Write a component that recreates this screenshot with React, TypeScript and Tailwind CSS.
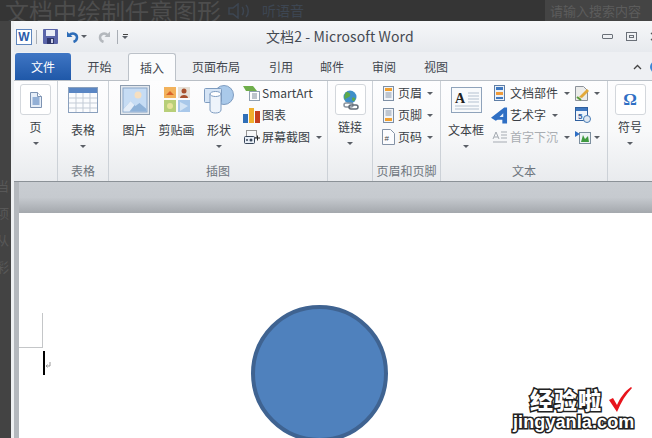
import React from "react";

const font = { fontFamily: '"Noto Sans CJK SC", "Liberation Sans", sans-serif' };

function Arrow({ cls = "" }: { cls?: string }) {
  return <span className={`inline-block w-0 h-0 border-x-[3px] border-x-transparent border-t-[3px] border-t-[#5a5f66] ${cls}`} />;
}

function PageIcon() {
  return (
    <svg width="12" height="16" viewBox="0 0 12 16">
      <path d="M.5.5h7l4 4v11H.500z" fill="#e6eef8" stroke="#7d93b2" />
      <rect x="2.500" y="5" width="7" height="8" fill="#93b0d6" />
      <path d="M7.500 .5v4h4" fill="#fff" stroke="#7d93b2" />
    </svg>
  );
}

function TableIcon() {
  return (
    <svg width="30" height="26" viewBox="0 0 30 26">
      <rect x=".5" y=".5" width="29" height="25" fill="#fbfcfe" stroke="#8aa0bd" />
      <rect x="1" y="1" width="28" height="5" fill="#5a86c4" />
      <path d="M1 11h28M1 16h28M1 21h28M8 6v19M15 6v19M22 6v19" stroke="#c3cbd6" />
    </svg>
  );
}

function PictureIcon() {
  return (
    <svg width="30" height="30" viewBox="0 0 30 30">
      <rect x=".5" y=".5" width="29" height="29" fill="#e3e8ee" stroke="#8d9db0" />
      <rect x="3" y="3" width="24" height="24" fill="#c6dcf4" stroke="#8aa6c8" />
      <circle cx="18" cy="10" r="3.500" fill="#f6dfc0" />
      <path d="M3.500 24l7-8 5 5 4-3 7 6v2.500H3.500z" fill="#8fb2d8" />
      <path d="M3.500 24l7-8 4 4-5 6.500H3.500z" fill="#e4edf8" />
    </svg>
  );
}

function ClipIcon() {
  return (
    <svg width="26" height="25" viewBox="0 0 26 25">
      <rect x="0" y="0" width="12" height="11" fill="#f2b25c" />
      <path d="M2 8l4-4 4 4z" fill="#d9652a" />
      <rect x="14" y="0" width="12" height="11" fill="#e6e0d6" />
      <circle cx="20" cy="4" r="2.500" fill="#a8502c" />
      <path d="M16 11c0-4 8-4 8 0z" fill="#a8502c" />
      <rect x="0" y="13" width="12" height="12" fill="#b8cf79" />
      <circle cx="6" cy="19" r="3" fill="#e6e39a" />
      <rect x="14" y="13" width="12" height="12" fill="#a9c8ea" />
      <path d="M16 15l8 4-8 5z" fill="#d4e4f5" />
    </svg>
  );
}

function ShapeIcon() {
  return (
    <svg width="30" height="29" viewBox="0 0 30 29">
      <circle cx="20" cy="10" r="9.500" fill="#a9c9ea" stroke="#7e9cc0" />
      <rect x=".5" y="3.500" width="17" height="14" rx="1" fill="#d5e4f5" stroke="#7e9cc0" />
      <path d="M6 9v16c0 4 11 4 11 0V9z" fill="#eef4fb" stroke="#7e9cc0" />
      <ellipse cx="11.500" cy="9" rx="5.500" ry="2.500" fill="#fff" stroke="#7e9cc0" />
    </svg>
  );
}

function SmartArtIcon() {
  return (
    <svg width="17" height="16" viewBox="0 0 17 16">
      <path d="M0 1h10l4 5H3z" fill="#6fae4b" />
      <rect x="6.500" y="6.500" width="10" height="9" fill="#fff" stroke="#90a0b0" />
      <path d="M9 9h5M9 11h5M9 13h5" stroke="#7d8b99" />
    </svg>
  );
}

function ChartIcon() {
  return (
    <svg width="17" height="16" viewBox="0 0 17 16">
      <rect x="0" y="7" width="5" height="9" fill="#2f6fb8" />
      <rect x="6" y="1" width="5" height="15" fill="#f0b02c" />
      <rect x="12" y="4" width="5" height="12" fill="#c5401e" />
    </svg>
  );
}

function ShotIcon() {
  return (
    <svg width="16" height="14" viewBox="0 0 16 14">
      <rect x="2.500" y=".5" width="10" height="7" fill="none" stroke="#333" strokeDasharray="1 1" />
      <rect x=".5" y="6.500" width="10" height="7" rx="1" fill="#e8eef6" stroke="#39475a" />
      <circle cx="3" cy="10" r="1" fill="#39475a" />
      <circle cx="7" cy="10" r="1.500" fill="#39475a" />
      <path d="M11 8h5M13.500 5.500v5" stroke="#222" />
    </svg>
  );
}

function GlobeIcon() {
  return (
    <svg width="17" height="20" viewBox="0 0 17 20">
      <circle cx="8" cy="7" r="6.500" fill="#3f8fc9" />
      <path d="M4 2c3 0 5 2 4 4s-4 1-5 4c-1-2-1-5 1-8zM10 8c2-1 4 0 3 2s-3 2-3-2z" fill="#5ca94a" />
      <rect x="2" y="13" width="9" height="4" rx="2" fill="none" stroke="#8a949e" strokeWidth="1.500" />
      <rect x="7" y="15" width="9" height="4" rx="2" fill="none" stroke="#626b75" strokeWidth="1.500" />
    </svg>
  );
}

function HeaderIcon({ bottom }: { bottom?: boolean }) {
  return (
    <svg width="11" height="15" viewBox="0 0 11 15">
      <rect x=".5" y=".5" width="10" height="14" fill="#f2f5f9" stroke="#7d8fa5" />
      {bottom ? (
        <>
          <path d="M2.500 3h6M2.500 5h6M2.500 7h6" stroke="#8a97a8" />
          <rect x="2" y="10" width="7" height="3" fill="#f0a030" />
        </>
      ) : (
        <>
          <rect x="2" y="2" width="7" height="3" fill="#f0a030" />
          <path d="M2.500 7h6M2.500 9h6M2.500 11h6" stroke="#8a97a8" />
        </>
      )}
    </svg>
  );
}

function PartsIcon() {
  return (
    <svg width="11" height="16" viewBox="0 0 11 16">
      <rect x=".5" y=".5" width="10" height="15" fill="#eaf0f7" stroke="#5f7ea6" />
      <rect x="2" y="2" width="7" height="3" fill="#3f78c0" />
      <rect x="2" y="7" width="7" height="3" fill="#ee9a3a" />
      <rect x="2" y="12" width="7" height="2" fill="#3f78c0" />
    </svg>
  );
}

function PageNumIcon() {
  return (
    <svg width="13" height="16" viewBox="0 0 13 16">
      <path d="M.5.5h8l4 4v11H.500z" fill="#fbfcfe" stroke="#8493a6" />
      <text x="2.500" y="11.500" fontSize="8" fill="#444" fontFamily="Liberation Sans">#</text>
    </svg>
  );
}

function TextBoxIcon() {
  return (
    <svg width="31" height="26" viewBox="0 0 31 26">
      <rect x=".5" y=".5" width="30" height="25" fill="#f8fafc" stroke="#8fa3bb" />
      <path d="M17 6h11M17 9h11M17 12h11M17 15h11M4 19h24M4 22h24" stroke="#b4c1d0" />
      <text x="4" y="16" fontSize="14" fontWeight="700" fill="#222" fontFamily="Liberation Serif">A</text>
    </svg>
  );
}

function WordArtIcon() {
  return (
    <svg width="18" height="17" viewBox="0 0 18 17">
      <path d="M0 11L14 0h3v17h-5v-4H7l-2 1z" fill="#2f6fc4" />
      <path d="M9 10l4-4v4z" fill="#eaf2fb" />
    </svg>
  );
}

function DropCapIcon() {
  return (
    <svg width="15" height="14" viewBox="0 0 15 14">
      <path d="M1 9l3-7 3 7M2 7h4M9 2h6M9 5h6M9 8h6M1 12h14" stroke="#a5abb2" fill="none" />
    </svg>
  );
}

function SignIcon() {
  return (
    <svg width="15" height="15" viewBox="0 0 15 15">
      <path d="M.5.5h8l4 4v10H.500z" fill="#ececea" stroke="#8c929a" />
      <path d="M4 11l8-8 2 2-7 7z" fill="#e2a93a" />
      <path d="M2 11l4 3" stroke="#5c9a3a" strokeWidth="2" />
    </svg>
  );
}

function DateIcon() {
  return (
    <svg width="16" height="16" viewBox="0 0 16 16">
      <rect x=".5" y=".5" width="12" height="13" fill="#eef4fb" stroke="#2f5f9e" />
      <rect x="1" y="1" width="11" height="3" fill="#3f78c0" />
      <text x="3" y="12" fontSize="8" fontWeight="700" fill="#2f5f9e" fontFamily="Liberation Sans">5</text>
      <circle cx="12" cy="12" r="3.500" fill="#dfe8f2" stroke="#4a7db5" />
    </svg>
  );
}

function ObjectIcon() {
  return (
    <svg width="16" height="14" viewBox="0 0 16 14">
      <rect x="4.500" y="2.500" width="11" height="11" fill="#eef3f6" stroke="#7d8f9f" />
      <path d="M6 12l2-7 2 4 3-3 1 6z" fill="#3f9a3f" />
      <path d="M0 1l5 3-5 3z" fill="#2f6fc4" />
    </svg>
  );
}

function Group({ label, w, children }: { label?: string; w: string; children: React.ReactNode }) {
  return (
    <div className={`${w} shrink-0 h-full flex flex-col border-r border-[#ccd1d7]`}>
      <div className="h-[80px] flex">{children}</div>
      <div className="h-[19px] flex items-center justify-center text-[12px] leading-none text-[#6e757d]">{label}</div>
    </div>
  );
}

function Big({ icon, label, w, arrow, boxed, mt = "" }: { icon: React.ReactNode; label: string; w: string; arrow?: boolean; boxed?: boolean; mt?: string }) {
  return (
    <div className={`${w} shrink-0 flex flex-col items-center pt-[3px]`}>
      {boxed ? (
        <div className="w-[31px] h-[31px] rounded-[3px] border border-[#d3d7dc] bg-white flex items-center justify-center">{icon}</div>
      ) : (
        <div className="h-[31px] flex items-center justify-center">{icon}</div>
      )}
      <div className={`text-[12px] leading-none text-[#3a3f46] whitespace-nowrap ${mt || "mt-[6px]"}`}>{label}</div>
      {arrow && <Arrow cls="mt-[9px]" />}
    </div>
  );
}

function Small({ icon, label, arrow, disabled, gap = "gap-[2px]" }: { icon: React.ReactNode; label: string; arrow?: boolean; disabled?: boolean; gap?: string }) {
  return (
    <div className={`h-[22px] flex items-center ${gap} whitespace-nowrap`}>
      <span className="w-[17px] flex justify-center">{icon}</span>
      <span className={`text-[12px] leading-none ${disabled ? "text-[#a9adb2]" : "text-[#3a3f46]"}`}>{label}</span>
      {arrow && <Arrow cls="ml-[4px]" />}
    </div>
  );
}

const tabs = [
  ["开始", "w-[57px]"],
  ["插入", "w-[48px]"],
  ["页面布局", "w-[80px]"],
  ["引用", "w-[50px]"],
  ["邮件", "w-[52px]"],
  ["审阅", "w-[52px]"],
  ["视图", "w-[52px]"],
] as const;

export default function App() {
  return (
    <div style={font} className="relative w-[652px] h-[438px] overflow-hidden bg-[#3a3a3a] flex flex-col">
      <div className="h-[21px] shrink-0 flex items-center overflow-hidden bg-[#353535]">
        <span className="pl-[5px] text-[24px] leading-none text-[#4d4d4d] whitespace-nowrap">文档中绘制任意图形</span>
        <svg className="ml-[7px]" width="24" height="16" viewBox="0 0 24 16" fill="none" stroke="#3d4652" strokeWidth="1.500">
          <path d="M1 5h4l5-4v14l-5-4H1zM14 4c2 2 2 6 0 8M18 2c3 3 3 9 0 12" />
        </svg>
        <span className="ml-[10px] text-[14px] text-[#3d4652] whitespace-nowrap">听语音</span>
        <div className="ml-auto w-[107px] h-full bg-[#444444] flex items-center pl-[5px] text-[13px] text-[#5c5c5c] whitespace-nowrap">请输入搜索内容</div>
      </div>
      <div className="flex-1 flex min-h-0">
        <div className="w-[11px] shrink-0 bg-[#434343] flex flex-col items-start overflow-hidden text-[13px] leading-none text-[#585858] pt-[158px] gap-[14px]">
          <span className="-ml-[4px]">当</span>
          <span className="-ml-[4px]">项</span>
          <span className="-ml-[4px]">从</span>
          <span className="-ml-[4px]">彩</span>
        </div>
        <div className="w-[3px] shrink-0 bg-[#eef0f2]" />
        <div className="flex-1 min-w-0 flex flex-col bg-[#eef0f3]">
          <div className="h-[31px] shrink-0 flex items-center pl-[2px] bg-gradient-to-b from-[#f6f7f9] to-[#e7eaee]">
            <div className="w-[16px] h-[16px] shrink-0 bg-white border border-[#5f86bd] flex items-center justify-center text-[12px] font-bold leading-none text-[#2a5caa]" style={{ fontFamily: '"Liberation Sans", sans-serif' }}>W</div>
            <div className="w-px h-[14px] bg-[#a9aeb5] ml-[4px]" />
            <svg className="ml-[6px]" width="15" height="15" viewBox="0 0 15 15">
              <rect width="15" height="15" rx="1" fill="#5a64a8" />
              <rect x="3" y="1" width="9" height="6" fill="#e9ecf6" />
              <rect x="4" y="9" width="7" height="6" fill="#2e356b" />
              <rect x="8" y="10" width="2" height="4" fill="#c9cde6" />
            </svg>
            <svg className="ml-[8px]" width="13" height="13" viewBox="0 0 13 13" fill="none">
              <path d="M1 1.500v5.500h5.500z" fill="#2e6db8" />
              <path d="M3 5.500c3-3.500 8-2 8 2 0 2-1 3.500-3.500 4.500" stroke="#2e6db8" strokeWidth="2.500" />
            </svg>
            <Arrow cls="ml-[2px]" />
            <svg className="ml-[11px]" width="13" height="13" viewBox="0 0 13 13" fill="none">
              <path d="M12 1.500v5.500H6.500z" fill="#b4b8bd" />
              <path d="M10 5.500c-3-3.500-8-2-8 2 0 2 1 3.500 3.500 4.500" stroke="#b4b8bd" strokeWidth="2.500" />
            </svg>
            <div className="w-px h-[14px] bg-[#a9aeb5] ml-[6px]" />
            <div className="ml-[4px] flex flex-col items-center gap-[1px]">
              <div className="w-[5px] h-px bg-[#444]" />
              <Arrow />
            </div>
            <span className="ml-[138px] text-[14px] text-[#454a52] whitespace-nowrap tracking-[0.1px]">文档2 - Microsoft Word</span>
            <div className="ml-auto flex items-center gap-[13px] -mr-[9px]">
              <div className="w-[11px] h-[5px] border border-[#6a7078] rounded-[1px]" />
              <div className="w-[11px] h-[9px] border border-[#6a7078] flex items-center justify-center"><div className="w-[5px] h-[3px] border border-[#6a7078]" /></div>
              <svg width="11" height="9" viewBox="0 0 11 9" stroke="#555" strokeWidth="1.500"><path d="M1 1l9 7M10 1l-9 7" /></svg>
            </div>
          </div>
          <div className="h-[28px] shrink-0 flex items-end pl-[1px] text-[12px] text-[#41464e]">
            <div className="w-[56px] h-[27px] rounded-t-[3px] bg-gradient-to-b from-[#3f76c4] to-[#1f58a8] text-white flex items-center justify-center">文件</div>
            {tabs.map(([t, w]) =>
              t === "插入" ? (
                <div key={t} className={`${w} h-[28px] -mb-px z-10 bg-[#fbfcfd] border border-b-0 border-[#bcc2c9] rounded-t-[3px] flex items-center justify-center`}>{t}</div>
              ) : (
                <div key={t} className={`${w} h-[27px] flex items-center justify-center`}>{t}</div>
              ),
            )}
            <div className="ml-auto h-[27px] flex items-center gap-[8px] -mr-[10px]">
              <svg width="9" height="6" viewBox="0 0 9 6" fill="none" stroke="#444" strokeWidth="1.300"><path d="M1 5l3.500-3.500L8 5" /></svg>
              <div className="w-[12px] h-[12px] rounded-full bg-[#3c86d6]" />
            </div>
          </div>
          <div className="h-[102px] shrink-0 flex border-t border-b border-t-[#b9bfc6] border-b-[#8b9197] bg-gradient-to-b from-[#fdfdfe] via-[#f8f9fa] to-[#e9ebee] overflow-hidden">
            <Group w="w-[44px]">
              <Big w="w-full" icon={<PageIcon />} label="页" arrow boxed />
            </Group>
            <Group w="w-[51px]" label="表格">
              <Big w="w-full" icon={<TableIcon />} label="表格" arrow mt="mt-[9px]" />
            </Group>
            <Group w="w-[219px]" label="插图">
              <div className="flex pl-[5px]">
                <Big w="w-[41px]" icon={<PictureIcon />} label="图片" mt="mt-[9px]" />
                <Big w="w-[43px]" icon={<ClipIcon />} label="剪贴画" mt="mt-[9px]" />
                <Big w="w-[42px]" icon={<ShapeIcon />} label="形状" arrow mt="mt-[9px]" />
              </div>
              <div className="flex flex-col pl-[3px] pt-[1px]">
                <Small icon={<SmartArtIcon />} label="SmartArt" />
                <Small icon={<ChartIcon />} label="图表" />
                <Small icon={<ShotIcon />} label="屏幕截图" arrow />
              </div>
            </Group>
            <Group w="w-[45px]">
              <Big w="w-full" icon={<GlobeIcon />} label="链接" arrow boxed />
            </Group>
            <Group w="w-[68px]" label="页眉和页脚">
              <div className="flex flex-col pl-[7px] pt-[1px]">
                <Small icon={<HeaderIcon />} label="页眉" arrow gap="gap-[1px]" />
                <Small icon={<HeaderIcon bottom />} label="页脚" arrow gap="gap-[1px]" />
                <Small icon={<PageNumIcon />} label="页码" arrow gap="gap-[1px]" />
              </div>
            </Group>
            <Group w="w-[167px]" label="文本">
              <Big w="w-[50px]" icon={<TextBoxIcon />} label="文本框" arrow mt="mt-[9px]" />
              <div className="flex flex-col pt-[1px] w-[84px]">
                <Small icon={<PartsIcon />} label="文档部件" arrow />
                <Small icon={<WordArtIcon />} label="艺术字" arrow />
                <Small icon={<DropCapIcon />} label="首字下沉" arrow disabled />
              </div>
              <div className="flex flex-col pt-[1px]">
                <div className="h-[22px] flex items-center gap-[4px]"><SignIcon /><Arrow /></div>
                <div className="h-[22px] flex items-center"><DateIcon /></div>
                <div className="h-[22px] flex items-center gap-[3px]"><ObjectIcon /><Arrow /></div>
              </div>
            </Group>
            <div className="w-[44px] shrink-0 flex flex-col">
              <Big w="w-full" icon={<span className="text-[17px] font-bold leading-none text-[#2f6fc4]" style={{ fontFamily: '"Liberation Serif", serif' }}>Ω</span>} label="符号" arrow boxed />
            </div>
          </div>
          <div className="flex-1 min-h-0 flex bg-[#e9eaec]">
            <div className="w-[5px] shrink-0 bg-[#b4b8bd]" />
            <div className="flex-1 min-w-0 flex flex-col">
              <div className="h-[31px] shrink-0 bg-gradient-to-b from-[#c9cdd2] via-[#c6cacf] to-[#a4a8ad]" />
              <div className="flex-1 min-h-0 bg-white overflow-hidden flex items-start">
                <div className="w-[24px] h-[162px] shrink-0 flex flex-col items-end">
                  <div className="h-[100px] w-full shrink-0" />
                  <div className="h-[35px] w-full shrink-0 border-r border-b border-[#c4c6c8]" />
                  <div className="mt-[3px] -mr-[2px] w-[2px] h-[24px] shrink-0 bg-black relative">
                    <svg className="absolute left-[2px] top-[11px]" width="6" height="7" viewBox="0 0 6 7" fill="none" stroke="#999"><path d="M5 0v4H1M2.500 2.500L1 4l1.500 1.500" /></svg>
                  </div>
                </div>
                <div className="ml-[208px] mt-[92px] w-[137px] h-[137px] shrink-0 rounded-full bg-[#4f81bd] border-[4px] border-[#3f6391]" />
              </div>
            </div>
          </div>
        </div>
      </div>
      <div className="absolute left-[513px] top-[386px] flex flex-col items-start">
        <div className="flex items-center ml-[17px] h-[26px]">
          <span className="text-[23px] font-black leading-none text-white tracking-[1px] [-webkit-text-stroke:3px_#222] [paint-order:stroke_fill]">经验啦</span>
          <svg className="ml-[6px]" width="24" height="26" viewBox="0 0 24 26"><path d="M1 14l4-2 4 7C12 12 17 5 23 1l1 1C18 8 13 16 9 26z" fill="#e8141c" /></svg>
        </div>
        <span className="mt-[1px] text-[18px] font-bold leading-none text-white tracking-[0.1px] [-webkit-text-stroke:3px_#222] [paint-order:stroke_fill]" style={{ fontFamily: '"Liberation Sans", sans-serif' }}>jingyanla.com</span>
      </div>
    </div>
  );
}
